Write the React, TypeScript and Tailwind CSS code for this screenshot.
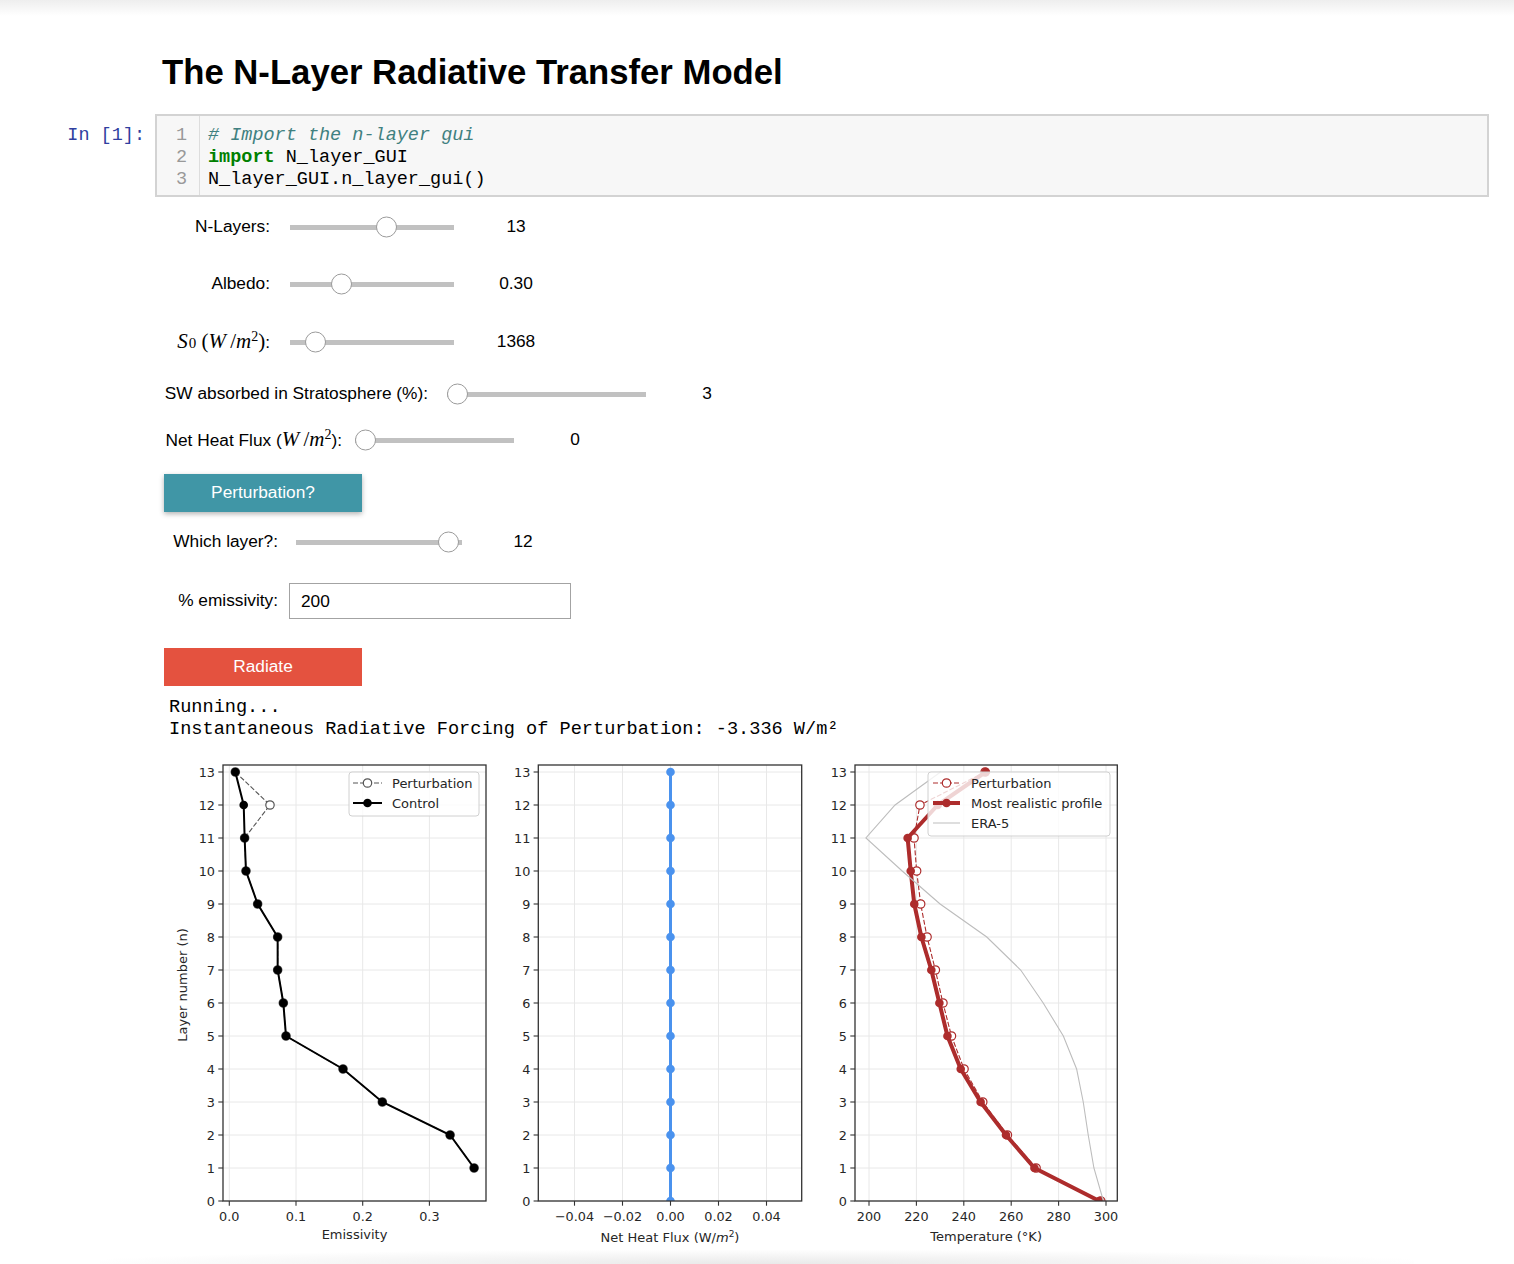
import React from "react";

// axes geometry shared by the three matplotlib panels (local svg coords)
const TOP = 10;
const BOTTOM = 446;
const PANEL_H = 495;
const LAYERS = [0, 1, 2, 3, 4, 5, 6, 7, 8, 9, 10, 11, 12, 13];
const yOf = (n: number) => BOTTOM - n * 33;

const emisControl: [number, number][] = [
  [13, 0.009], [12, 0.0216], [11, 0.023], [10, 0.025], [9, 0.0425], [8, 0.0725],
  [7, 0.0725], [6, 0.081], [5, 0.085], [4, 0.1705], [3, 0.2294], [2, 0.331], [1, 0.367],
];
const emisPert: [number, number][] = emisControl.map(([n, v]) => [n, n === 12 ? 0.061 : v]);

const tempProfile: [number, number][] = [
  [13, 249.2], [12, 229], [11, 216.3], [10, 217.6], [9, 219.1], [8, 222.1], [7, 226.3],
  [6, 229.7], [5, 233.1], [4, 238.7], [3, 247.1], [2, 257.8], [1, 269.8], [0, 297.2],
];
const tempPert: [number, number][] = [
  [13, 249], [12, 221.5], [11, 219], [10, 220.1], [9, 221.8], [8, 224.5], [7, 228],
  [6, 231.2], [5, 234.8], [4, 240.1], [3, 248], [2, 258.4], [1, 270.5], [0, 297.8],
];
const era5: [number, number][] = [
  [13, 230.2], [12, 211], [11, 198.7], [10, 214], [9, 230], [8, 249.7], [7, 264],
  [6, 273.5], [5, 282], [4, 287.6], [3, 290.4], [2, 292.5], [1, 294.9], [0, 298.9],
];

const RED = "#ad2c2c";

type PanelProps = {
  id: string;
  width: number;
  left: number;
  right: number;
  x: (v: number) => number;
  xTicks: { v: number; label: string }[];
  xLabel: React.ReactNode;
  xLabelY: number;
  yLabel?: string;
  legend?: React.ReactNode;
  children: React.ReactNode;
};

function Panel({ id, width, left, right, x, xTicks, xLabel, xLabelY, yLabel, legend, children }: PanelProps) {
  return (
    <svg width={width} height={PANEL_H} className="shrink-0" fontFamily="'DejaVu Sans', sans-serif" fill="#262626">
      <defs>
        <clipPath id={id}>
          <rect x={left} y={TOP} width={right - left} height={BOTTOM - TOP} />
        </clipPath>
      </defs>
      <g stroke="#e8e8e8" strokeWidth={1}>
        {xTicks.map((t) => (
          <line key={t.label} x1={x(t.v)} x2={x(t.v)} y1={TOP} y2={BOTTOM} />
        ))}
        {LAYERS.map((n) => (
          <line key={n} x1={left} x2={right} y1={yOf(n)} y2={yOf(n)} />
        ))}
      </g>
      <g clipPath={`url(#${id})`}>{children}</g>
      {legend}
      <rect x={left} y={TOP} width={right - left} height={BOTTOM - TOP} fill="none" stroke="#333" strokeWidth={1.3} />
      <g stroke="#333" strokeWidth={1.1}>
        {LAYERS.map((n) => (
          <line key={n} x1={left - 4.7} x2={left} y1={yOf(n)} y2={yOf(n)} />
        ))}
        {xTicks.map((t) => (
          <line key={t.label} x1={x(t.v)} x2={x(t.v)} y1={BOTTOM} y2={BOTTOM + 4.7} />
        ))}
      </g>
      <g fontSize={12.8}>
        {LAYERS.map((n) => (
          <text key={n} x={left - 8} y={yOf(n)} dy="0.36em" textAnchor="end">
            {n}
          </text>
        ))}
        {xTicks.map((t) => (
          <text key={t.label} x={x(t.v)} y={465.5} textAnchor="middle">
            {t.label}
          </text>
        ))}
      </g>
      <text x={(left + right) / 2} y={xLabelY} fontSize={13} textAnchor="middle">
        {xLabel}
      </text>
      {yLabel && (
        <text x={17} y={230} dy="0.36em" fontSize={13} textAnchor="middle" transform="rotate(-90 17 230)">
          {yLabel}
        </text>
      )}
    </svg>
  );
}

const pts = (data: [number, number][], x: (v: number) => number) =>
  data.map(([n, v]) => `${x(v)},${yOf(n)}`).join(" ");

function EmissivityPlot() {
  const x = (v: number) => 64.3 + v * 667;
  return (
    <Panel
      id="clip-emis"
      width={330}
      left={58}
      right={321}
      x={x}
      xTicks={[
        { v: 0, label: "0.0" },
        { v: 0.1, label: "0.1" },
        { v: 0.2, label: "0.2" },
        { v: 0.3, label: "0.3" },
      ]}
      xLabel="Emissivity"
      xLabelY={483.5}
      yLabel="Layer number (n)"
      legend={
        <g>
          <rect x={184} y={17} width={130} height={44} rx={3} fill="white" fillOpacity={0.8} stroke="#d0d0d0" />
          <line x1={188} x2={217} y1={28} y2={28} stroke="#555" strokeDasharray="5 2" />
          <circle cx={202.5} cy={28} r={4.2} fill="white" stroke="#555" strokeWidth={1.2} />
          <text x={227} y={28} dy="0.36em" fontSize={13}>Perturbation</text>
          <line x1={188} x2={217} y1={48} y2={48} stroke="#000" strokeWidth={2} />
          <circle cx={202.5} cy={48} r={4.3} fill="#000" />
          <text x={227} y={48} dy="0.36em" fontSize={13}>Control</text>
        </g>
      }
    >
      <polyline points={pts(emisPert, x)} fill="none" stroke="#555" strokeWidth={1.1} strokeDasharray="5 2" />
      {emisPert.map(([n, v]) => (
        <circle key={n} cx={x(v)} cy={yOf(n)} r={4.2} fill="white" stroke="#555" strokeWidth={1.2} />
      ))}
      <polyline points={pts(emisControl, x)} fill="none" stroke="#000" strokeWidth={2} />
      {emisControl.map(([n, v]) => (
        <circle key={n} cx={x(v)} cy={yOf(n)} r={4.3} fill="#000" />
      ))}
    </Panel>
  );
}

function FluxPlot() {
  const x = (v: number) => 170.5 + v * 2400;
  return (
    <Panel
      id="clip-flux"
      width={310}
      left={38.3}
      right={301.7}
      x={x}
      xTicks={[
        { v: -0.04, label: "\u22120.04" },
        { v: -0.02, label: "\u22120.02" },
        { v: 0, label: "0.00" },
        { v: 0.02, label: "0.02" },
        { v: 0.04, label: "0.04" },
      ]}
      xLabel={
        <>
          Net Heat Flux (W/<tspan fontStyle="italic">m</tspan>
          <tspan fontSize={9} dy={-5}>2</tspan>
          <tspan dy={5}>)</tspan>
        </>
      }
      xLabelY={487}
    >
      <line x1={x(0)} x2={x(0)} y1={yOf(0)} y2={yOf(13)} stroke="#4a92ee" strokeWidth={3} />
      {LAYERS.map((n) => (
        <circle key={n} cx={x(0)} cy={yOf(n)} r={4.3} fill="#4a92ee" />
      ))}
    </Panel>
  );
}

function TemperaturePlot() {
  const x = (v: number) => 54 + (v - 200) * 2.37;
  return (
    <Panel
      id="clip-temp"
      width={310}
      left={40}
      right={302.3}
      x={x}
      xTicks={[200, 220, 240, 260, 280, 300].map((v) => ({ v, label: String(v) }))}
      xLabel="Temperature (°K)"
      xLabelY={486}
      legend={
        <g>
          <rect x={113} y={17} width={182} height={64} rx={3} fill="white" fillOpacity={0.8} stroke="#d0d0d0" />
          <line x1={118} x2={145} y1={28} y2={28} stroke={RED} strokeDasharray="5 2" />
          <circle cx={131.5} cy={28} r={4.2} fill="white" stroke={RED} strokeWidth={1.2} />
          <text x={156} y={28} dy="0.36em" fontSize={13}>Perturbation</text>
          <line x1={118} x2={145} y1={48} y2={48} stroke={RED} strokeWidth={4} />
          <circle cx={131.5} cy={48} r={4.3} fill={RED} />
          <text x={156} y={48} dy="0.36em" fontSize={13}>Most realistic profile</text>
          <line x1={118} x2={145} y1={68} y2={68} stroke="#bdbdbd" strokeWidth={1} />
          <text x={156} y={68} dy="0.36em" fontSize={13}>ERA-5</text>
        </g>
      }
    >
      <polyline points={pts(tempPert, x)} fill="none" stroke={RED} strokeWidth={1.1} strokeDasharray="5 2" />
      {tempPert.map(([n, v]) => (
        <circle key={n} cx={x(v)} cy={yOf(n)} r={4.2} fill="white" stroke={RED} strokeWidth={1.2} />
      ))}
      <polyline points={pts(tempProfile, x)} fill="none" stroke={RED} strokeWidth={4} strokeLinejoin="round" />
      {tempProfile.map(([n, v]) => (
        <circle key={n} cx={x(v)} cy={yOf(n)} r={4.3} fill={RED} />
      ))}
      <polyline points={pts(era5, x)} fill="none" stroke="#bdbdbd" strokeWidth={1.1} />
    </Panel>
  );
}

type SliderProps = {
  className: string;
  width: number;
  value: number;
  min: number;
  max: number;
};

function Slider({ className, width, value, min, max }: SliderProps) {
  // thumb travels between the ends of the track, 10px in from each side
  const center = 10 + ((value - min) / (max - min)) * (width - 20);
  return (
    <div className={`relative flex h-[28px] items-center ${className}`}>
      <div className="h-[5px] w-full bg-[#c1c1c1]" />
      <div
        className="absolute top-1/2 h-[21px] w-[21px] -translate-y-1/2 rounded-full border-[1.5px] border-[#9b9b9b] bg-white"
        style={{ left: center - 10.5 }}
      />
    </div>
  );
}

const Serif = ({ children }: { children: React.ReactNode }) => (
  <span className="font-['Liberation_Serif',serif] text-[21px]">{children}</span>
);

export default function App() {
  return (
    <div className="min-h-screen bg-white font-['Liberation_Sans',Arial,sans-serif] text-black">
      <div className="h-[16px] bg-linear-to-b from-[#eeeeee] to-white" />

      <h1 className="ml-[162px] mt-[35px] text-[34.7px] font-bold leading-[42px]">
        The N-Layer Radiative Transfer Model
      </h1>

      {/* code cell */}
      <div className="mt-[21px] flex font-['Liberation_Mono',monospace] text-[18.5px] leading-[22px]">
        <div className="w-[155px] shrink-0 pr-[10px] pt-[11px] text-right text-[#303f9f]">In&nbsp;[1]:</div>
        <div className="mr-[25px] flex flex-1 border-2 border-[#d3d3d3] bg-[#f7f7f7]">
          <div className="w-[43px] border-r border-[#dddddd] pb-[4px] pr-[12px] pt-[9px] text-right text-[#999999]">
            <div>1</div>
            <div>2</div>
            <div>3</div>
          </div>
          <div className="pb-[4px] pl-[8px] pt-[9px] whitespace-pre">
            <div className="italic text-[#408080]"># Import the n-layer gui</div>
            <div>
              <span className="font-bold text-[#008000]">import</span> N_layer_GUI
            </div>
            <div>N_layer_GUI.n_layer_gui()</div>
          </div>
        </div>
      </div>

      {/* widgets */}
      <div className="flex flex-col pl-[164px] text-[17.3px]">
        <div className="mt-[16px] flex h-[28px] items-center">
          <div className="w-[116px] pr-[10px] text-right">N-Layers:</div>
          <Slider className="ml-[10px] w-[164px]" width={164} value={13} min={1} max={21} />
          <div className="w-[124px] text-center">13</div>
        </div>

        <div className="mt-[29px] flex h-[28px] items-center">
          <div className="w-[116px] pr-[10px] text-right">Albedo:</div>
          <Slider className="ml-[10px] w-[164px]" width={164} value={0.3} min={0} max={1.05} />
          <div className="w-[124px] text-center">0.30</div>
        </div>

        <div className="mt-[30px] flex h-[28px] items-center">
          <div className="w-[116px] whitespace-nowrap pr-[10px] text-right">
            <Serif>
              <i className="mr-[1px]">S</i>
              <span className="text-[15px]">0</span> (<i>W</i>&thinsp;/<i>m</i>
              <sup className="text-[14px]">2</sup>)
            </Serif>
            :
          </div>
          <Slider className="ml-[10px] w-[164px]" width={164} value={1368} min={1200} max={2800} />
          <div className="w-[124px] text-center">1368</div>
        </div>

        <div className="mt-[24px] flex h-[28px] items-center">
          <div className="w-[274px] whitespace-nowrap pr-[10px] text-right">SW absorbed in Stratosphere (%):</div>
          <Slider className="ml-[9px] w-[199px]" width={199} value={3} min={3} max={100} />
          <div className="w-[122px] text-center">3</div>
        </div>

        <div className="mt-[18px] flex h-[28px] items-center">
          <div className="w-[190px] whitespace-nowrap pr-[12px] text-right">
            Net Heat Flux (
            <Serif>
              <i>W</i>&thinsp;/<i>m</i>
              <sup className="text-[14px]">2</sup>
            </Serif>
            ):
          </div>
          <Slider className="ml-[1px] w-[159px]" width={159} value={0} min={0} max={100} />
          <div className="w-[122px] text-center">0</div>
        </div>

        <button className="mt-[20px] flex h-[38px] w-[198px] items-center justify-center bg-[#4096a6] text-white shadow-[0_2px_5px_rgba(0,0,0,0.3)]">
          Perturbation?
        </button>

        <div className="mt-[16px] flex h-[28px] items-center">
          <div className="w-[124px] pr-[10px] text-right">Which layer?:</div>
          <Slider className="ml-[8px] w-[166px]" width={166} value={12} min={1} max={12.3} />
          <div className="w-[122px] text-center">12</div>
        </div>

        <div className="mt-[27px] flex h-[36px] items-center">
          <div className="w-[124px] pr-[10px] text-right">% emissivity:</div>
          <input
            readOnly
            value="200"
            className="ml-[1px] h-[36px] w-[282px] border-[1.5px] border-[#a3a3a3] bg-white pl-[11px] text-[17.3px] outline-none"
          />
        </div>

        <button className="mt-[29px] flex h-[38px] w-[198px] items-center justify-center bg-[#e4523f] text-white">
          Radiate
        </button>
      </div>

      {/* output */}
      <pre className="ml-[169px] mt-[11px] font-['Liberation_Mono',monospace] text-[18.6px] leading-[22px]">
        {"Running...\nInstantaneous Radiative Forcing of Perturbation: -3.336 W/m\u00b2"}
      </pre>

      <div className="ml-[165px] mt-[14px] flex gap-[5px]">
        <EmissivityPlot />
        <FluxPlot />
        <TemperaturePlot />
      </div>

      <div className="mx-[100px] h-[14px] bg-[radial-gradient(ellipse_at_50%_100%,#e9e9e9,#ffffff_75%)]" />
    </div>
  );
}
